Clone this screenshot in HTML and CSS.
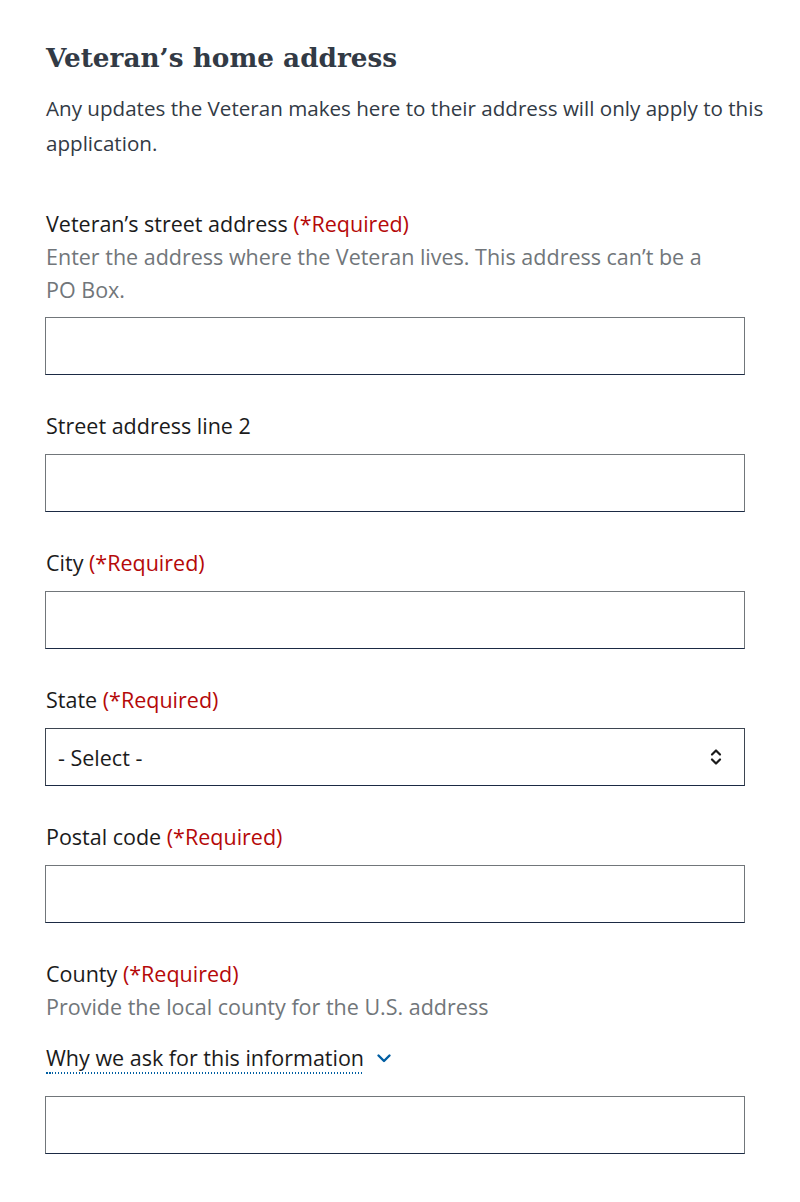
FILE: index.html
```html
<!DOCTYPE html>
<html lang="en">
<head>
<meta charset="utf-8">
<title>Veteran's home address</title>
<link rel="stylesheet" href="styles.css">
</head>
<body>
<main class="page">
  <h1 class="title">Veteran’s home address</h1>
  <p class="intro">Any updates the Veteran makes here to their address will only apply to this application.</p>

  <div class="field field-first">
    <label class="label" for="street">Veteran’s street address <span class="req">(*Required)</span></label>
    <div class="hint">Enter the address where the Veteran lives. This address can’t be a PO Box.</div>
    <input class="input" id="street" type="text">
  </div>

  <div class="field">
    <label class="label" for="street2">Street address line 2</label>
    <input class="input" id="street2" type="text">
  </div>

  <div class="field">
    <label class="label" for="city">City <span class="req">(*Required)</span></label>
    <input class="input" id="city" type="text">
  </div>

  <div class="field">
    <label class="label" for="state">State <span class="req">(*Required)</span></label>
    <div class="select">
      <span class="select-text">- Select -</span>
      <svg class="select-icon" width="12" height="20" viewBox="0 0 12 20" aria-hidden="true">
        <path d="M2 7.5 L6 3.5 L10 7.5" fill="none" stroke="#1b1b1b" stroke-width="2.2" stroke-linecap="round" stroke-linejoin="round"/>
        <path d="M2 12.5 L6 16.5 L10 12.5" fill="none" stroke="#1b1b1b" stroke-width="2.2" stroke-linecap="round" stroke-linejoin="round"/>
      </svg>
    </div>
  </div>

  <div class="field">
    <label class="label" for="postal">Postal code <span class="req">(*Required)</span></label>
    <input class="input" id="postal" type="text">
  </div>

  <div class="field">
    <label class="label" for="county">County <span class="req">(*Required)</span></label>
    <div class="hint">Provide the local county for the U.S. address</div>
    <div class="why">
      <span class="why-text">Why we ask for this information</span>
      <svg class="why-icon" width="16" height="12" viewBox="0 0 16 12" aria-hidden="true">
        <path d="M2.5 3.5 L8 9 L13.5 3.5" fill="none" stroke="#005ea2" stroke-width="2.4" stroke-linecap="round" stroke-linejoin="round"/>
      </svg>
    </div>
    <input class="input" id="county" type="text">
  </div>
</main>
</body>
</html>
```

FILE: styles.css
```css
html, body {
  margin: 0;
  padding: 0;
  background: #ffffff;
}

.page {
  width: 740px;
  padding: 0 0 0 45px;
  font-family: "Open Sans", "Noto Sans", sans-serif;
  font-size: 21.5px;
  color: #1b1b1b;
}

.title {
  margin: 40px 0 0 1px;
  font-family: "DejaVu Serif", serif;
  font-weight: bold;
  font-size: 26.3px;
  line-height: 36px;
  color: #323a45;
  letter-spacing: 0;
}

.intro {
  margin: 15px 0 0 1px;
  font-size: 20.6px;
  line-height: 35px;
  color: #323a45;
}

.field {
  display: flex;
  flex-direction: column;
  margin-top: 35px;
}

.field-first {
  margin-top: 47px;
}

.label {
  display: block;
  margin-left: 1px;
  line-height: 32px;
  color: #1b1b1b;
}

.req {
  color: #b50909;
}

.hint {
  margin-left: 1px;
  line-height: 33px;
  color: #71767a;
  max-width: 690px;
}

.input {
  box-sizing: border-box;
  display: block;
  width: 700px;
  height: 58px;
  margin: 11px 0 0 0;
  padding: 0 12px;
  border: 1px solid #71767a;
  border-bottom-color: #1b2a44;
  border-radius: 0;
  background: #ffffff;
  font: inherit;
}

.label + .input {
  margin-top: 12px;
}

.select {
  box-sizing: border-box;
  width: 700px;
  height: 58px;
  margin-top: 12px;
  padding: 0 22px 0 12px;
  border: 1px solid #3d4551;
  border-bottom-color: #1b2a44;
  display: flex;
  align-items: center;
  justify-content: space-between;
}

.select-text {
  color: #1b1b1b;
}

.why {
  margin: 19px 0 0 1px;
  display: flex;
  align-items: center;
  gap: 12px;
  line-height: 32px;
}

.why-text {
  color: #1b1b1b;
  line-height: 32px;
  background-image: repeating-linear-gradient(to right, #005ea2 0, #005ea2 1.5px, transparent 1.5px, transparent 3px);
  background-size: 100% 2px;
  background-repeat: no-repeat;
  background-position: 0 100%;
}

.why + .input {
  margin-top: 22px;
}
```
